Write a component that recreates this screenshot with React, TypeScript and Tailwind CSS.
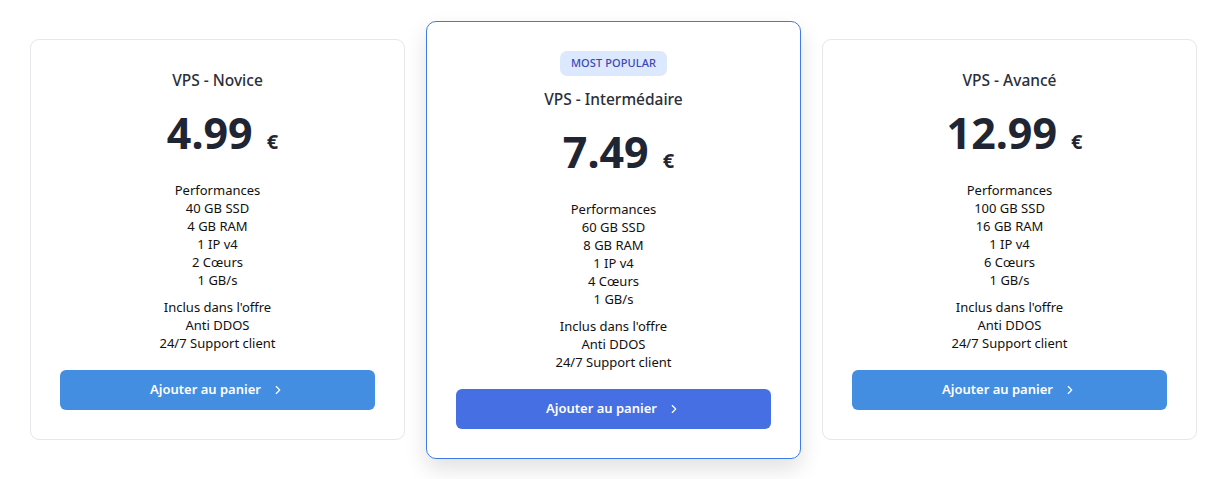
import { ChevronRight } from "lucide-react";

type Plan = {
  name: string;
  price: string;
  perf: string[];
  popular?: boolean;
};

const PLANS: Plan[] = [
  {
    name: "VPS - Novice",
    price: "4.99",
    perf: ["40 GB SSD", "4 GB RAM", "1 IP v4", "2 Cœurs", "1 GB/s"],
  },
  {
    name: "VPS - Intermédaire",
    price: "7.49",
    perf: ["60 GB SSD", "8 GB RAM", "1 IP v4", "4 Cœurs", "1 GB/s"],
    popular: true,
  },
  {
    name: "VPS - Avancé",
    price: "12.99",
    perf: ["100 GB SSD", "16 GB RAM", "1 IP v4", "6 Cœurs", "1 GB/s"],
  },
];

function PlanCard({ plan }: { plan: Plan }) {
  return (
    <div
      className={
        plan.popular
          ? "flex-1 flex flex-col items-center rounded-[10px] border border-[#3f7be8] bg-white px-[29px] pt-[29px] pb-[29px] shadow-[0_10px_22px_rgba(0,0,0,0.12)]"
          : "flex-1 flex flex-col items-center rounded-[9px] border border-[#e6e7ea] bg-white px-[29px] pt-[29px] pb-[29px]"
      }
    >
      {plan.popular && (
        <span className="mb-[12px] flex h-[25px] items-center rounded-[7px] bg-[#dce8fd] px-[11px] text-[11px] font-medium tracking-[0.1px] text-[#3a4ab4]">
          MOST POPULAR
        </span>
      )}
      <h3 className="text-[15.5px] leading-[23px] font-medium text-[#2a2f3a]">{plan.name}</h3>
      <div className="mt-[19px] ml-[10px] flex h-[44px] items-baseline gap-[14px] text-[#1f2533]">
        <span className="text-[43px] leading-[44px] font-bold">{plan.price}</span>
        <span className="text-[20px] font-bold">€</span>
      </div>
      <ul className="mt-[26px] text-center text-[13px] leading-[18px] text-[#111]">
        <li>Performances</li>
        {plan.perf.map((p) => (
          <li key={p}>{p}</li>
        ))}
      </ul>
      <ul className="mt-[9px] text-center text-[13px] leading-[18px] text-[#111]">
        <li>Inclus dans l'offre</li>
        <li>Anti DDOS</li>
        <li>24/7 Support client</li>
      </ul>
      <button
        className={
          plan.popular
            ? "mt-[18px] flex h-[40px] w-full items-center justify-center gap-[10px] rounded-[6px] bg-[#466fe3] text-[13px] font-semibold text-white"
            : "mt-[18px] flex h-[40px] w-full items-center justify-center gap-[10px] rounded-[6px] bg-[#438ee1] text-[13px] font-semibold text-white"
        }
      >
        Ajouter au panier
        <ChevronRight size={14} strokeWidth={2} />
      </button>
    </div>
  );
}

export default function App() {
  return (
    <div
      className="flex min-h-[479px] items-center gap-[21px] bg-white pl-[30px] pr-[27px]"
      style={{ fontFamily: '"Noto Sans", "Open Sans", sans-serif' }}
    >
      {PLANS.map((p) => (
        <PlanCard key={p.name} plan={p} />
      ))}
    </div>
  );
}
